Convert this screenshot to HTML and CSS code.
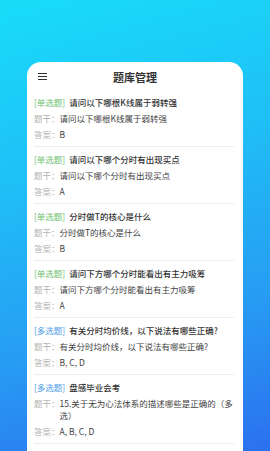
FILE: index.html
```html
<!DOCTYPE html>
<html lang="zh-CN">
<head>
    <meta charset="UTF-8">
    <meta name="viewport" content="width=device-width, initial-scale=1.0">
    <title>题库管理</title>
    <link rel="stylesheet" href="styles.css">
</head>
<body>
    <div class="card">
        <div class="bar">
            <span class="menu"><i></i><i></i><i></i></span>
            <h1>题库管理</h1>
            <span></span>
        </div>
        <ul class="list">
            <li class="item">
                <p class="q"><span class="tag single">[单选题]</span>请问以下哪根K线属于弱转强</p>
                <p class="row"><span class="k">题干：</span><span class="v">请问以下哪根K线属于弱转强</span></p>
                <p class="row"><span class="k">答案：</span><span class="v">B</span></p>
            </li>
            <li class="item">
                <p class="q"><span class="tag single">[单选题]</span>请问以下哪个分时有出现买点</p>
                <p class="row"><span class="k">题干：</span><span class="v">请问以下哪个分时有出现买点</span></p>
                <p class="row"><span class="k">答案：</span><span class="v">A</span></p>
            </li>
            <li class="item">
                <p class="q"><span class="tag single">[单选题]</span>分时做T的核心是什么</p>
                <p class="row"><span class="k">题干：</span><span class="v">分时做T的核心是什么</span></p>
                <p class="row"><span class="k">答案：</span><span class="v">B</span></p>
            </li>
            <li class="item">
                <p class="q"><span class="tag single">[单选题]</span>请问下方哪个分时能看出有主力吸筹</p>
                <p class="row"><span class="k">题干：</span><span class="v">请问下方哪个分时能看出有主力吸筹</span></p>
                <p class="row"><span class="k">答案：</span><span class="v">A</span></p>
            </li>
            <li class="item">
                <p class="q"><span class="tag multi">[多选题]</span>有关分时均价线，以下说法有哪些正确?</p>
                <p class="row"><span class="k">题干：</span><span class="v">有关分时均价线，以下说法有哪些正确?</span></p>
                <p class="row"><span class="k">答案：</span><span class="v">B, C, D</span></p>
            </li>
            <li class="item">
                <p class="q"><span class="tag multi">[多选题]</span>盘感毕业会考</p>
                <p class="row"><span class="k">题干：</span><span class="v">15.关于无为心法体系的描述哪些是正确的（多选）</span></p>
                <p class="row"><span class="k">答案：</span><span class="v">A, B, C, D</span></p>
            </li>
            <li class="item">
                <p class="q"><span class="tag multi">[多选题]</span>盘感毕业会考</p>
                <p class="row"><span class="k">题干：</span><span class="v">16.关于无为心法体系的描述哪些是正确的（多选）</span></p>
                <p class="row"><span class="k">答案：</span><span class="v">A, B, C</span></p>
            </li>
        </ul>
    </div>
</body>
</html>
```

FILE: styles.css
```css
html, body {
    margin: 0;
    height: 451px;
    overflow: hidden;
}
body {
    font-family: "Noto Sans CJK SC", "Noto Sans", sans-serif;
    background: linear-gradient(165deg, #18dcf9 0%, #1fc0f7 35%, #279cf3 70%, #2c70ef 100%);
}
.card {
    margin: 62px 27px 0;
    height: 389px;
    background: #fff;
    border-radius: 14px 14px 0 0;
    overflow: hidden;
}
.bar {
    height: 28px;
    display: grid;
    grid-template-columns: 1fr auto 1fr;
    align-items: center;
    padding: 0 11px;
}
.menu {
    display: flex;
    flex-direction: column;
    gap: 1.5px;
    width: 9px;
    padding-top: 1px;
}
.menu i {
    display: block;
    height: 1.5px;
    background: #333;
}
.bar h1 {
    margin: 0;
    font-size: 11px;
    font-weight: 700;
    color: #333;
    padding-top: 2px;
}
.list {
    list-style: none;
    margin: 0;
    padding: 0 9px 0 7px;
}
.item {
    padding: 6px 0;
    border-bottom: 1px solid #eeeeee;
}
.item p {
    margin: 4px 0 0;
    font-size: 8.5px;
    line-height: 12px;
    color: #3a3a3a;
}
.item p.q {
    margin-top: 0;
    font-weight: 500;
    color: #333;
}
.tag {
    margin-right: 4px;
    font-weight: 400;
}
.single {
    color: #6dc26f;
}
.multi {
    color: #4d9be6;
}
.row {
    display: flex;
}
.k {
    flex: none;
    color: #b3b3b3;
}
.v {
    color: #3f3f3f;
}
```
